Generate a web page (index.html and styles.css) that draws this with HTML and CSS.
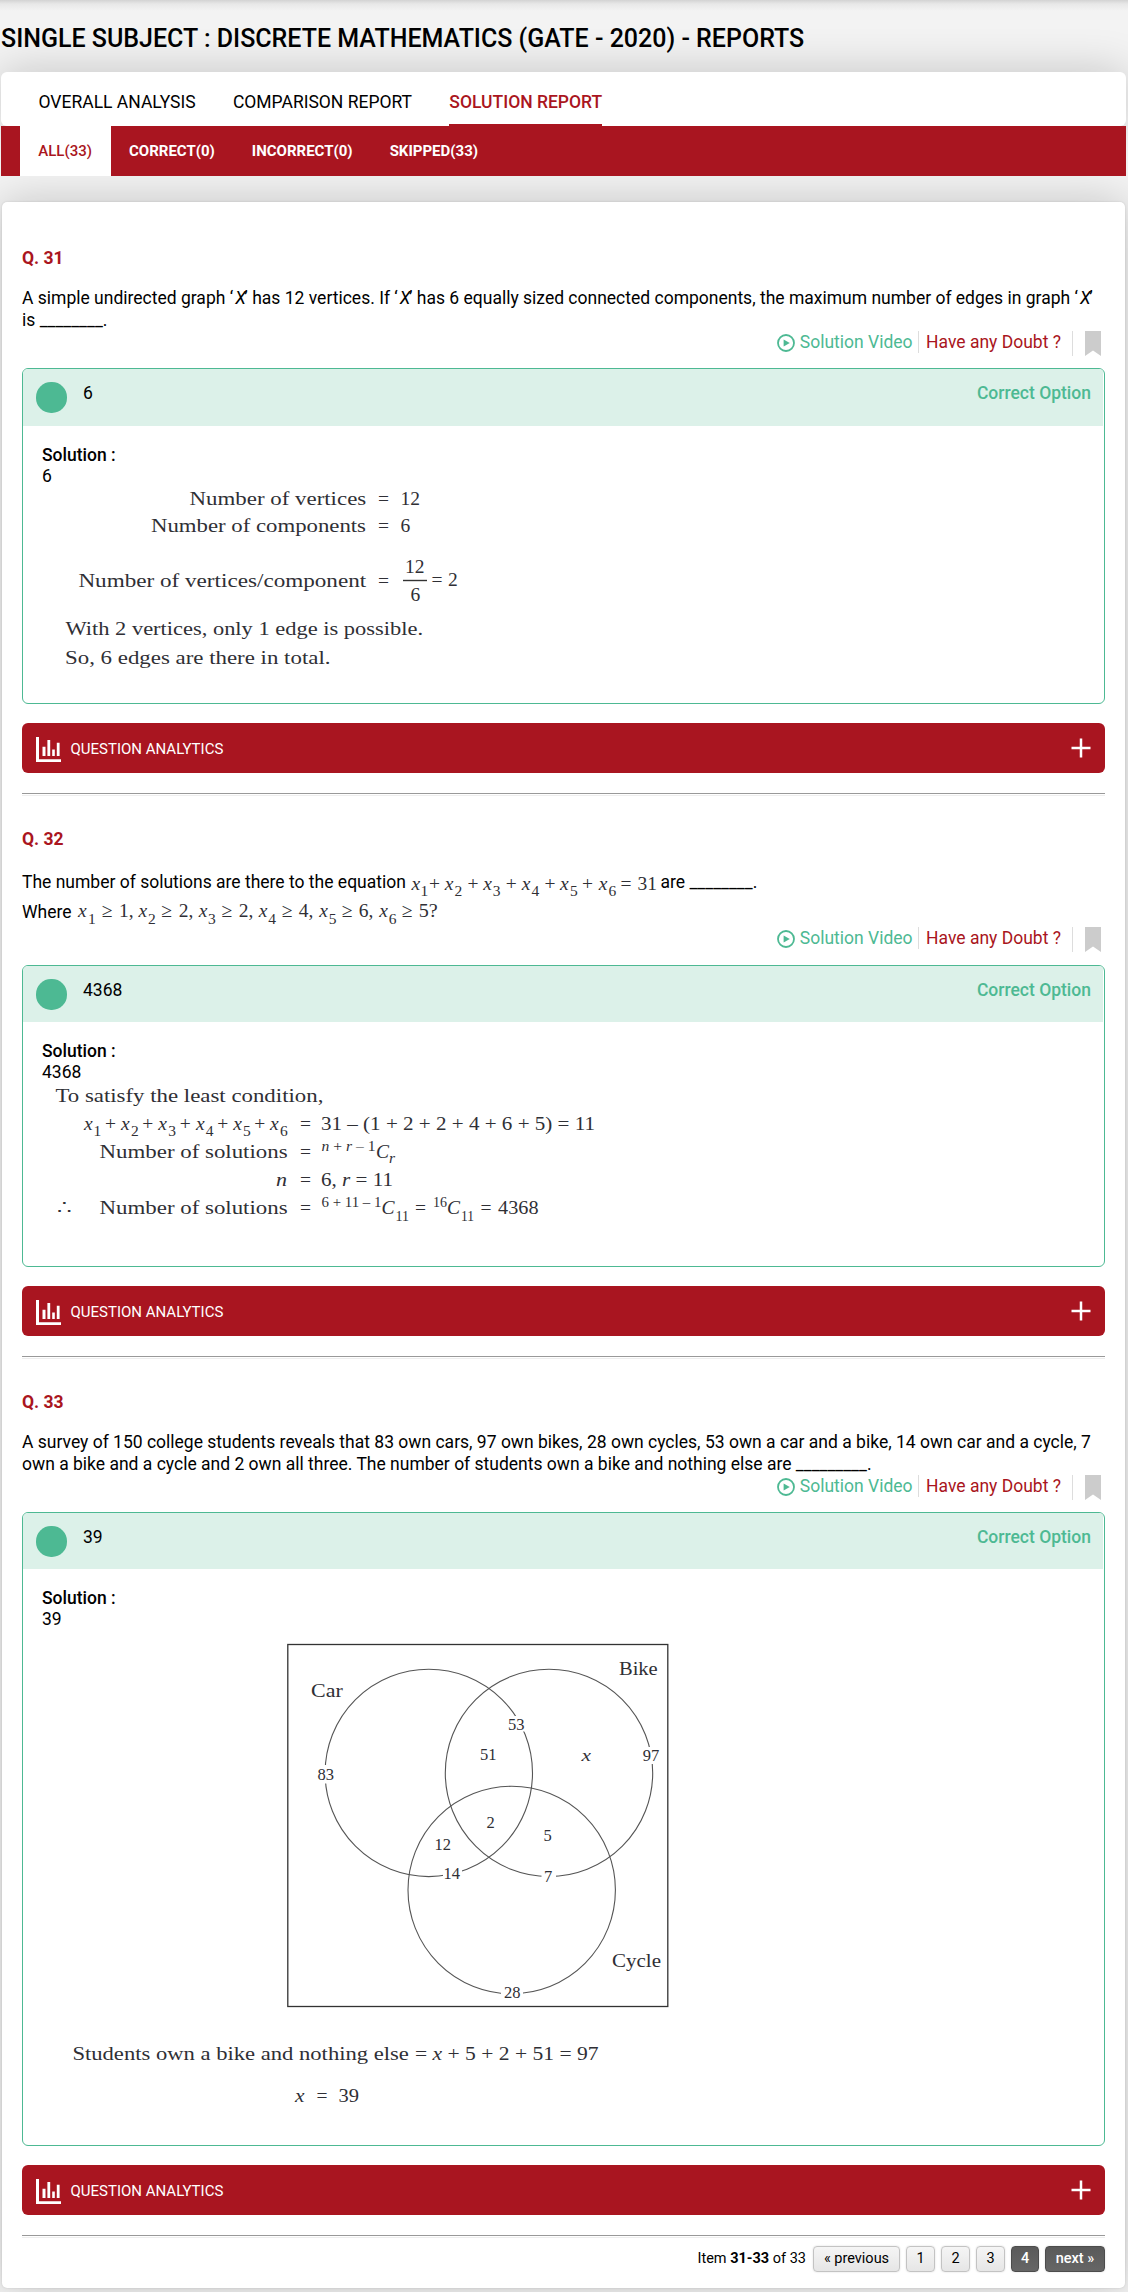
FILE: index.html
```html
<!DOCTYPE html>
<html lang="en">
<head>
<meta charset="utf-8">
<title>Single Subject : Discrete Mathematics (GATE - 2020) - Reports</title>
<link rel="stylesheet" href="styles.css">
</head>
<body>
<svg class="sprite" width="0" height="0" aria-hidden="true">
  <symbol id="play" viewBox="0 0 18 18"><circle cx="9" cy="9" r="8" fill="none" stroke="#4db993" stroke-width="1.8"/><path d="M6.6 5.6 12.8 9 6.6 12.4Z" fill="#4db993"/></symbol>
  <symbol id="bookmark" viewBox="0 0 16 25"><path d="M0 0H16V25L8 19.5 0 25Z" fill="#ccc"/></symbol>
  <symbol id="chart" viewBox="0 0 25 25"><path d="M0 0H3V22.3H25V25H0ZM6.5 9.7H9.5V19H6.5ZM11.4 3H14.2V19H11.4ZM16.2 12.5H18.8V19H16.2ZM20.8 5.7H23.6V19H20.8Z" fill="#fff"/></symbol>
  <symbol id="plus" viewBox="0 0 20 20"><path d="M10 .5V19.5M.5 10H19.5" stroke="#fff" stroke-width="2.5" fill="none"/></symbol>
</svg>
<header class="page-head"><h1>SINGLE SUBJECT : DISCRETE MATHEMATICS (GATE - 2020) - REPORTS</h1></header>

<nav class="reports">
  <a>OVERALL ANALYSIS</a>
  <a>COMPARISON REPORT</a>
  <a class="active">SOLUTION REPORT</a>
</nav>
<nav class="filters">
  <a class="active">ALL(33)</a>
  <a>CORRECT(0)</a>
  <a>INCORRECT(0)</a>
  <a>SKIPPED(33)</a>
</nav>

<main class="card">
  <section class="question">
    <h2>Q. 31</h2>
    <p class="prompt">A simple undirected graph ‘<i>X</i>’ has 12 vertices. If ‘<i>X</i>’ has 6 equally sized connected components, the maximum number of edges in graph ‘<i>X</i>’ is ________.</p>
    <div class="links">
      <a class="video"><svg width="18" height="18"><use href="#play"/></svg>Solution Video</a>
      <a class="doubt">Have any Doubt ?</a>
      <span class="mark"><svg width="16" height="25"><use href="#bookmark"/></svg></span>
    </div>
    <div class="answer a31">
      <div class="option"><span class="dot"></span><span class="value">6</span><strong>Correct Option</strong></div>
      <div class="solution">
        <b>Solution :</b>
        <p>6</p>
        <svg class="math" width="600" height="200" viewBox="42 487 600 200">
          <text x="189.6" y="505" textLength="176.6" lengthAdjust="spacingAndGlyphs">Number of vertices</text><text x="378" y="505">=</text><text x="400.5" y="505">12</text>
          <text x="151" y="532" textLength="215" lengthAdjust="spacingAndGlyphs">Number of components</text><text x="378" y="532">=</text><text x="400.5" y="532">6</text>
          <text x="78.4" y="587" textLength="287.8" lengthAdjust="spacingAndGlyphs">Number of vertices/component</text><text x="378" y="587">=</text>
          <text x="405" y="572.5">12</text><path d="M403 580.5H427" stroke="#333" stroke-width="1.4"/><text x="410.5" y="601">6</text>
          <text x="431.5" y="585.5">=</text><text x="448" y="585.5">2</text>
          <text x="65.5" y="635" textLength="357.5" lengthAdjust="spacingAndGlyphs">With 2 vertices, only 1 edge is possible.</text>
          <text x="65" y="664.3" textLength="265.5" lengthAdjust="spacingAndGlyphs">So, 6 edges are there in total.</text>
        </svg>
      </div>
    </div>
    <div class="analytics"><svg class="chart" width="25" height="25"><use href="#chart"/></svg><span>QUESTION ANALYTICS</span><svg width="20" height="20"><use href="#plus"/></svg></div>
    <hr>
  </section>

  <section class="question">
    <h2>Q. 32</h2>
    <p class="prompt tall">The number of solutions are there to the equation <svg class="math inline" width="246" height="22" viewBox="410 873 246 22">
      <g class="var"><text x="411.5" y="889.7">x</text><text x="444.8" y="889.7">x</text><text x="483.3" y="889.7">x</text><text x="521.8" y="889.7">x</text><text x="560" y="889.7">x</text><text x="598.8" y="889.7">x</text></g>
      <g class="sub"><text x="420.5" y="896">1</text><text x="454.5" y="896">2</text><text x="492.8" y="896">3</text><text x="531.5" y="896">4</text><text x="570" y="896">5</text><text x="608.5" y="896">6</text></g>
      <text x="429" y="889.7">+</text><text x="467.5" y="889.7">+</text><text x="505.8" y="889.7">+</text><text x="544.5" y="889.7">+</text><text x="582" y="889.7">+</text><text x="620.5" y="889.7">=</text><text x="637.5" y="889.7">31</text>
    </svg> are ________.<br>Where <svg class="math inline" width="364" height="22" viewBox="76 902 364 22">
      <g class="var"><text x="78" y="916.3">x</text><text x="138.5" y="916.3">x</text><text x="198.8" y="916.3">x</text><text x="258.8" y="916.3">x</text><text x="319.3" y="916.3">x</text><text x="379.3" y="916.3">x</text></g>
      <g class="sub"><text x="88" y="923">1</text><text x="148" y="923">2</text><text x="208" y="923">3</text><text x="268.3" y="923">4</text><text x="328.8" y="923">5</text><text x="388.8" y="923">6</text></g>
      <text x="101.8" y="916">≥</text><text x="119" y="916">1,</text><text x="161.3" y="916">≥</text><text x="178.8" y="916">2,</text><text x="221.5" y="916">≥</text><text x="238.8" y="916">2,</text><text x="281.8" y="916">≥</text><text x="298.8" y="916">4,</text><text x="341.8" y="916">≥</text><text x="358.8" y="916">6,</text><text x="401.8" y="916">≥</text><text x="418.8" y="916" textLength="19" lengthAdjust="spacingAndGlyphs">5?</text>
    </svg></p>
    <div class="links roomy">
      <a class="video"><svg width="18" height="18"><use href="#play"/></svg>Solution Video</a>
      <a class="doubt">Have any Doubt ?</a>
      <span class="mark"><svg width="16" height="25"><use href="#bookmark"/></svg></span>
    </div>
    <div class="answer a32">
      <div class="option"><span class="dot"></span><span class="value">4368</span><strong>Correct Option</strong></div>
      <div class="solution">
        <b>Solution :</b>
        <p>4368</p>
        <svg class="math" width="600" height="160" viewBox="42 1083 600 160">
          <text x="55.4" y="1102" textLength="268" lengthAdjust="spacingAndGlyphs">To satisfy the least condition,</text>
          <g class="var"><text x="84" y="1130">x</text><text x="121" y="1130">x</text><text x="158.3" y="1130">x</text><text x="196" y="1130">x</text><text x="233.3" y="1130">x</text><text x="270" y="1130">x</text></g>
          <g class="sub"><text x="93.5" y="1136">1</text><text x="131" y="1136">2</text><text x="168.3" y="1136">3</text><text x="205.8" y="1136">4</text><text x="243" y="1136">5</text><text x="280" y="1136">6</text></g>
          <text x="105" y="1130">+</text><text x="142.3" y="1130">+</text><text x="179.8" y="1130">+</text><text x="217.3" y="1130">+</text><text x="254.3" y="1130">+</text>
          <text x="300" y="1130">=</text><text x="321" y="1130" textLength="274" lengthAdjust="spacingAndGlyphs">31 – (1 + 2 + 2 + 4 + 6 + 5) = 11</text>
          <text x="99.6" y="1158" textLength="188" lengthAdjust="spacingAndGlyphs">Number of solutions</text><text x="300" y="1158">=</text>
          <text class="sup" x="321.5" y="1150.5" textLength="54" lengthAdjust="spacingAndGlyphs"><tspan class="it">n</tspan> + <tspan class="it">r</tspan> – 1</text><text class="it" x="376" y="1158">C</text><text class="it sm" x="389" y="1163">r</text>
          <text class="it" x="276" y="1186" textLength="11" lengthAdjust="spacingAndGlyphs">n</text><text x="300" y="1186">=</text><text x="321" y="1186" textLength="72" lengthAdjust="spacingAndGlyphs">6, <tspan class="it">r</tspan> = 11</text>
          <text x="57" y="1214" textLength="15" lengthAdjust="spacingAndGlyphs">∴</text><text x="99.6" y="1214" textLength="188" lengthAdjust="spacingAndGlyphs">Number of solutions</text><text x="300" y="1214">=</text>
          <text class="sup" x="321.5" y="1206.5" textLength="60" lengthAdjust="spacingAndGlyphs">6 + 11 – 1</text><text class="it" x="381.5" y="1214">C</text><text class="sm" x="395.5" y="1221" textLength="13.5" lengthAdjust="spacingAndGlyphs">11</text>
          <text x="415" y="1214">=</text><text class="sup" x="433" y="1206.5">16</text><text class="it" x="447" y="1214">C</text><text class="sm" x="461" y="1221" textLength="13" lengthAdjust="spacingAndGlyphs">11</text><text x="480.5" y="1214">=</text><text x="498" y="1214" textLength="40.5" lengthAdjust="spacingAndGlyphs">4368</text>
        </svg>
      </div>
    </div>
    <div class="analytics"><svg class="chart" width="25" height="25"><use href="#chart"/></svg><span>QUESTION ANALYTICS</span><svg width="20" height="20"><use href="#plus"/></svg></div>
    <hr>
  </section>

  <section class="question">
    <h2>Q. 33</h2>
    <p class="prompt">A survey of 150 college students reveals that 83 own cars, 97 own bikes, 28 own cycles, 53 own a car and a bike, 14 own car and a cycle, 7 own a bike and a cycle and 2 own all three. The number of students own a bike and nothing else are _________.</p>
    <div class="links">
      <a class="video"><svg width="18" height="18"><use href="#play"/></svg>Solution Video</a>
      <a class="doubt">Have any Doubt ?</a>
      <span class="mark"><svg width="16" height="25"><use href="#bookmark"/></svg></span>
    </div>
    <div class="answer a33">
      <div class="option"><span class="dot"></span><span class="value">39</span><strong>Correct Option</strong></div>
      <div class="solution">
        <b>Solution :</b>
        <p>39</p>
        <svg class="math" width="660" height="490" viewBox="42 1630 660 490">
          <rect x="287.8" y="1644.5" width="380" height="362" fill="none" stroke="#333" stroke-width="1.3"/>
          <g fill="none" stroke="#555" stroke-width="1.1"><circle cx="428.8" cy="1772.9" r="103.7"/><circle cx="549" cy="1772.9" r="103.7"/><circle cx="511.7" cy="1890" r="103.7"/></g>
          <g fill="#fff"><path d="M508 1716H525V1731.5H508ZM642 1747H660V1764H642ZM316 1765H335V1783.5H316ZM443 1864H462V1882H443ZM541.5 1866H556V1885H541.5ZM501 1984H523V2001H501Z"/></g>
          <text x="311" y="1696.7" textLength="31.7" lengthAdjust="spacingAndGlyphs">Car</text><text x="619" y="1675.3" textLength="38.7" lengthAdjust="spacingAndGlyphs">Bike</text><text x="612" y="1967.3" textLength="49" lengthAdjust="spacingAndGlyphs">Cycle</text>
          <g class="num"><text x="508" y="1729.7">53</text><text x="480" y="1760">51</text><text class="it" x="581.5" y="1761" textLength="9.5" lengthAdjust="spacingAndGlyphs">x</text><text x="642.7" y="1761">97</text><text x="317.5" y="1779.7">83</text><text x="486.5" y="1827.7">2</text><text x="543.5" y="1840.7">5</text><text x="434.5" y="1849.7">12</text><text x="443.5" y="1878.7">14</text><text x="544" y="1882">7</text><text x="504" y="1998.3">28</text></g>
          <text x="72.4" y="2059.7" textLength="336.5" lengthAdjust="spacingAndGlyphs">Students own a bike and nothing else</text><text x="415" y="2059.7" textLength="183.5" lengthAdjust="spacingAndGlyphs">= <tspan class="it">x</tspan> + 5 + 2 + 51 = 97</text>
          <text class="it" x="295" y="2102.3" textLength="9.5" lengthAdjust="spacingAndGlyphs">x</text><text x="316.5" y="2102.3">=</text><text x="338.5" y="2102.3" textLength="20.5" lengthAdjust="spacingAndGlyphs">39</text>
        </svg>
      </div>
    </div>
    <div class="analytics"><svg class="chart" width="25" height="25"><use href="#chart"/></svg><span>QUESTION ANALYTICS</span><svg width="20" height="20"><use href="#plus"/></svg></div>
    <hr>
  </section>

  <nav class="pager">
    <span>Item <b>31-33</b> of 33</span>
    <a class="wide">« previous</a><a>1</a><a>2</a><a>3</a><a class="dark">4</a><a class="dark next">next »</a>
  </nav>
</main>
</body>
</html>
```
FILE: styles.css
```css
* { box-sizing: border-box; }

body {
  margin: 0;
  height: 2292px;
  overflow: hidden;
  background: #f3f3f3;
  color: #000;
  font: 17.5px/22px Roboto, "Liberation Sans", sans-serif;
}

h1, h2, p { margin: 0; }
.sprite { display: none; }
svg { display: block; flex: none; }

.page-head {
  height: 72px;
  padding: 25px 1px 0;
  background: linear-gradient(#d3d3d3, #e8e8e8 4px, #f3f3f3 11px);
}
h1 { font-size: 25px; line-height: 28px; font-weight: 500; white-space: nowrap; }

.reports {
  display: flex;
  gap: 37.3px;
  height: 54px;
  margin: 0 2px 0 1px;
  padding: 0 37.5px;
  background: #fff;
  border-radius: 6px;
  box-shadow: 0 0 45px rgba(0, 0, 0, .2);
}
.reports a { height: 54px; padding-top: 19px; }
.reports .active { color: #aa1520; font-weight: 500; border-bottom: 2px solid #aa1520; }

.filters {
  position: relative;
  display: flex;
  height: 50px;
  margin: 0 2px 0 1px;
  padding-left: 19px;
  background: #a91520;
  color: #fff;
  font-size: 15px;
  font-weight: 700;
  line-height: 50px;
}
.filters a { padding: 0 19px 0 18px; }
.filters .active { padding: 0 0 0 18.3px; width: 91px; background: #fff; color: #aa1520; font-weight: 500; }

.card {
  height: 2086px;
  margin: 26px 3px 0 2px;
  padding: 45px 20px 0;
  background: #fff;
  border-radius: 5px;
  box-shadow: 0 0 45px rgba(0, 0, 0, .2), 0 0 2px rgba(0, 0, 0, .15);
}

h2 { color: #aa1520; font-size: 17.5px; line-height: 22px; font-weight: 700; }
.prompt { margin-top: 18px; }
.prompt i { margin: 0 -1.5px 0 2px; }
.prompt.tall { line-height: 29.5px; }

.links { display: flex; justify-content: flex-end; height: 37px; line-height: 22px; padding-right: 4px; }
.links.roomy { height: 38px; }
.video { display: flex; gap: 4.5px; height: 22px; padding-right: 5.5px; border-right: 1px solid #ddd; color: #4db993; }
.video svg { margin-top: 3px; }
.doubt { padding: 0 11px 0 7px; color: #a91520; }
.mark { height: 25px; padding-left: 12px; border-left: 1px solid #ddd; }

.answer { border: 1px solid #4db993; border-radius: 6px; overflow: hidden; }
.a31 { height: 336px; }
.a32 { height: 302px; }
.a33 { height: 634px; }
.option {
  display: flex;
  height: 57px;
  padding: 13px 12px 0 13px;
  margin-right: 1px;
  background: #dcf1e9;
}
.a32 .option, .a33 .option { height: 56px; }
.dot { width: 31px; height: 31px; border-radius: 15px; background: #4db993; }
.value { margin-left: 16px; }
.option strong { margin-left: auto; color: #4db993; font-weight: 500; }
.solution { padding: 19px 19px 0; line-height: 21px; }
.solution b { font-weight: 500; }

.math { overflow: visible; font: 19.5px "Palatino Linotype", Palatino, "Liberation Serif", serif; fill: #2f2f35; }
.math.inline { display: inline-block; vertical-align: -7px; }
.it, .var { font-style: italic; }
.sub, .sm { font-size: 15.5px; }
.sup { font-size: 14px; }
.num { font-size: 16.5px; }

.analytics {
  display: flex;
  align-items: center;
  height: 50px;
  margin: 19px 0 20px;
  padding: 0 14px;
  border-radius: 6px;
  background: #a91520;
  color: #fff;
  font-size: 15px;
  line-height: 24px;
}
.chart { margin-top: 3px; }
.analytics span { flex: 1; padding: 2px 0 0 9.5px; }

hr { height: 3px; margin: 0; border: 0; border-top: 1px solid #999; border-bottom: 1px solid #eee; }
.question + .question { margin-top: 32px; }

.pager { display: flex; justify-content: flex-end; margin-top: 8px; font-size: 14.5px; line-height: 26px; }
.pager span { margin-right: 7px; }
.pager a {
  height: 26px;
  width: 29px;
  margin-right: 6px;
  line-height: 24px;
  text-align: center;
  border: 1px solid #c3c3c3;
  border-radius: 4px;
  background: linear-gradient(#f5f5f5, #e6e6e6);
  box-shadow: 0 0 2px rgba(0, 0, 0, .15);
}
.pager .wide { width: 87px; }
.pager .dark { border-color: #4c4c4c; background: linear-gradient(#5a5a5a, #666); color: #fff; font-weight: 500; width: 28px; }
.pager .next { width: 60px; margin-right: 0; }
```
